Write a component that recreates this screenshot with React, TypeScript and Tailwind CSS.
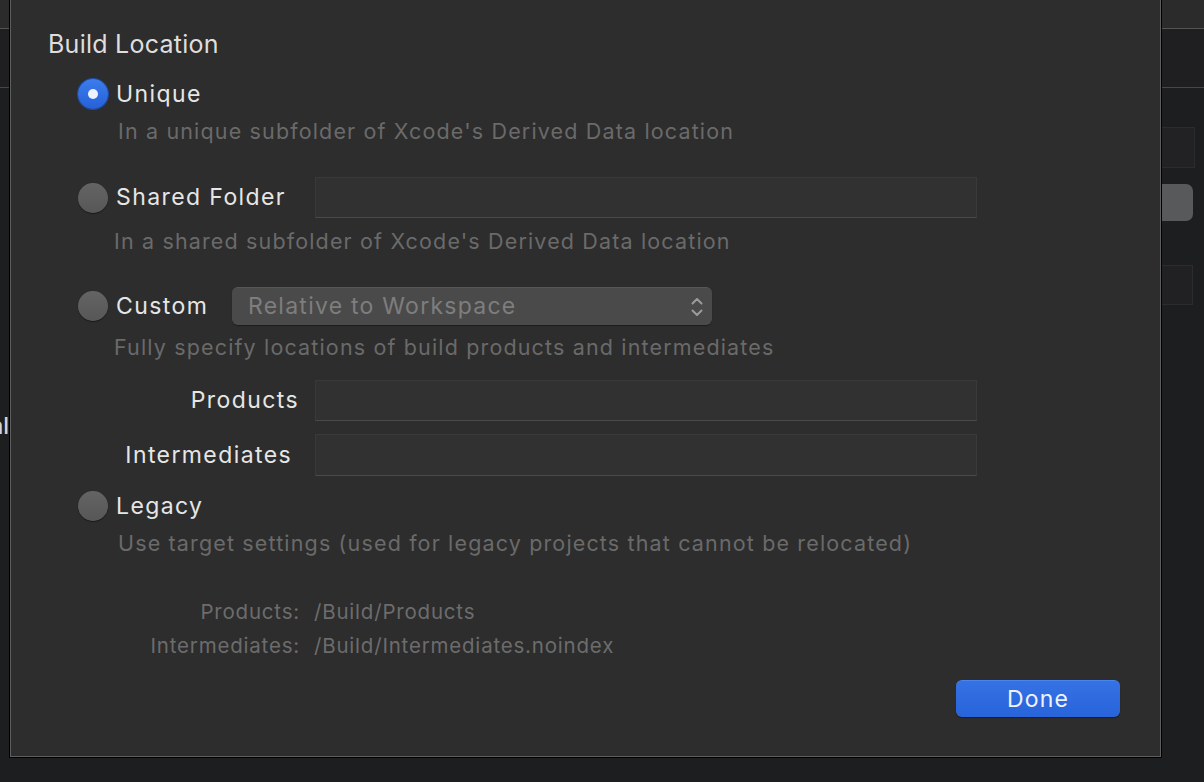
import type { ReactNode } from 'react';

const FONT = 'font-["Inter","Liberation_Sans",sans-serif]';

function Radio({ on }: { on?: boolean }) {
  if (on) {
    return (
      <span className="flex h-[30px] w-[30px] shrink-0 items-center justify-center rounded-full bg-linear-to-b from-[#3c7cec] to-[#2660d8] shadow-[0_0_0_1px_#1d4ba8]">
        <span className="h-[10px] w-[10px] rounded-full bg-[#eef2fc]" />
      </span>
    );
  }
  return (
    <span className="h-[30px] w-[30px] shrink-0 rounded-full bg-linear-to-b from-[#646464] to-[#575757] shadow-[0_1px_1px_rgba(0,0,0,0.45)]" />
  );
}

function Field({ className = '' }: { className?: string }) {
  return (
    <div
      className={`w-[662px] border border-[#393939] border-b-[#4a4a4a] bg-[#313131] ${className}`}
    />
  );
}

function Desc({ children, className = '' }: { children: ReactNode; className?: string }) {
  return (
    <div className={`flex h-[28px] items-center whitespace-nowrap text-[21.5px] tracking-[1.15px] text-[#6a6a6a] ${className}`}>
      {children}
    </div>
  );
}

function UpDown() {
  return (
    <svg width="14" height="22" viewBox="0 0 14 22" fill="none" stroke="#9b9b9b" strokeWidth="2" strokeLinecap="round" strokeLinejoin="round">
      <path d="M2.5 7.5 7 3l4.5 4.5" />
      <path d="M2.5 14.5 7 19l4.5-4.5" />
    </svg>
  );
}

export default function App() {
  return (
    <div className={`relative h-[782px] w-[1204px] overflow-hidden bg-[#1d1e20] ${FONT}`}>
      {/* window behind the sheet */}
      <div className="flex h-full flex-col">
        <div className="h-[29px] shrink-0 border-b border-[#545454] bg-[#2b2b2c]" />
        <div className="h-[59px] shrink-0 border-b border-[#474747] bg-[#1f1f21]" />
        <div className="flex flex-1">
          <div className="flex w-[9px] justify-end overflow-hidden pt-[324px]">
            <span className="whitespace-nowrap text-[23px] font-medium leading-[28px] text-[#d4d4d4]">Normal</span>
          </div>
          <div className="ml-auto flex w-[60px] flex-col">
            <div className="mt-[39px] h-[41px] w-[51px] border border-[#2c2c2e] bg-[#222224]" />
            <div className="mt-[16px] h-[37px] w-[49px] rounded-r-[7px] bg-[#58595b]" />
            <div className="mt-[44px] h-[40px] w-[49px] border border-[#2c2c2e] bg-[#212123]" />
          </div>
        </div>
      </div>

      {/* build location sheet */}
      <div className="absolute left-[9px] top-0 h-[758px] w-[1153px] border-x border-b border-black">
        <div className="flex h-full flex-col border-x border-b border-[#5e5e5e] bg-[#2d2d2d]">
          <div className="ml-[37px] mt-[30px] flex h-[30px] items-center text-[25px] tracking-[0.25px] text-[#dedede]">
            Build Location
          </div>

          <div className="ml-[67px] mt-[18px] flex h-[32px] items-center gap-[8px]">
            <Radio on />
            <span className="text-[23px] tracking-[1.4px] text-[#e6e6e6]">Unique</span>
          </div>
          <Desc className="ml-[107px] mt-[7px]">In a unique subfolder of Xcode's Derived Data location</Desc>

          <div className="ml-[67px] mt-[32px] flex h-[41px] items-center">
            <Radio />
            <span className="ml-[8px] w-[199px] text-[23px] tracking-[1.4px] text-[#e6e6e6]">Shared Folder</span>
            <Field className="h-[41px]" />
          </div>
          <Desc className="ml-[103px] mt-[9px]">In a shared subfolder of Xcode's Derived Data location</Desc>

          <div className="ml-[67px] mt-[32px] flex h-[38px] items-center">
            <Radio />
            <span className="ml-[8px] w-[116px] text-[23px] tracking-[1.4px] text-[#e6e6e6]">Custom</span>
            <div className="flex h-[38px] w-[480px] items-center justify-between rounded-[6px] border-t border-[#575757] bg-[#4a4a4a] pl-[16px] pr-[8px] shadow-[0_1px_1px_rgba(0,0,0,0.35)]">
              <span className="text-[23px] tracking-[1.25px] text-[#7e7e7e]">Relative to Workspace</span>
              <UpDown />
            </div>
          </div>
          <Desc className="ml-[103px] mt-[8px]">Fully specify locations of build products and intermediates</Desc>

          <div className="mt-[19px] flex h-[41px] items-center">
            <span className="w-[288px] text-right text-[23px] tracking-[1.4px] text-[#e6e6e6]">Products</span>
            <Field className="ml-[16px] h-[41px]" />
          </div>
          <div className="mt-[13px] flex h-[42px] items-center">
            <span className="w-[281px] text-right text-[23px] tracking-[1.4px] text-[#e6e6e6]">Intermediates</span>
            <Field className="ml-[23px] h-[42px]" />
          </div>

          <div className="ml-[67px] mt-[14px] flex h-[32px] items-center gap-[8px]">
            <Radio />
            <span className="text-[23px] tracking-[1.4px] text-[#e6e6e6]">Legacy</span>
          </div>
          <Desc className="ml-[107px] mt-[7px]">Use target settings (used for legacy projects that cannot be relocated)</Desc>

          <div className="mt-[41px] grid grid-cols-[289px_auto] gap-x-[14px] gap-y-[6px] text-[20.5px] tracking-[0.8px] text-[#6c6c6c]">
            <span className="flex h-[28px] items-center justify-end">Products:</span>
            <span className="flex h-[28px] items-center">/Build/Products</span>
            <span className="flex h-[28px] items-center justify-end">Intermediates:</span>
            <span className="flex h-[28px] items-center">/Build/Intermediates.noindex</span>
          </div>

          <button className="mr-[40px] mt-[20px] flex h-[37px] w-[164px] items-center justify-center self-end rounded-[6px] border-t border-[#4a86ee] bg-linear-to-b from-[#3572e4] to-[#2864da] text-[23px] tracking-[1.2px] text-[#eef2fb] shadow-[0_1px_1px_rgba(0,0,0,0.4)]">
            Done
          </button>
        </div>
      </div>
    </div>
  );
}
